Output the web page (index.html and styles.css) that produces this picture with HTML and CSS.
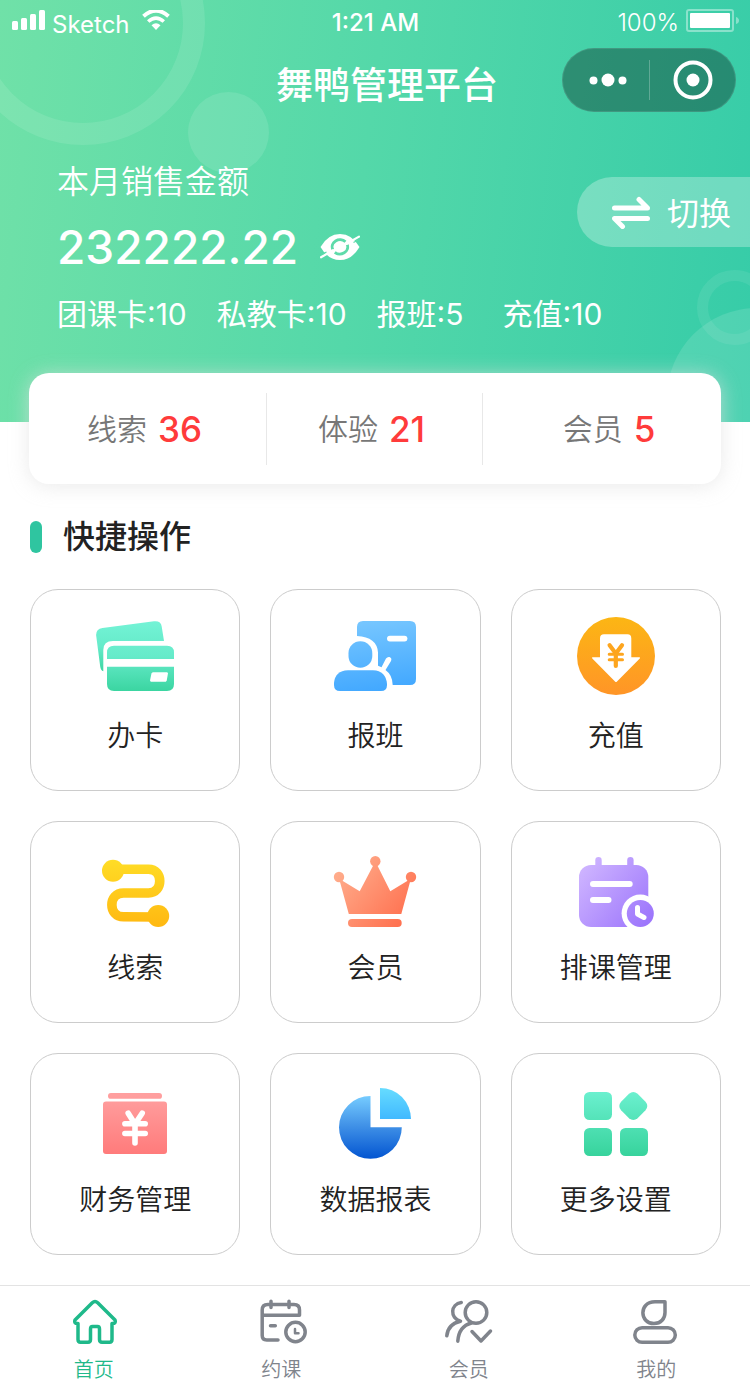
FILE: index.html
```html
<!DOCTYPE html>
<html lang="zh-CN">
<head>
<meta charset="utf-8">
<meta name="viewport" content="width=device-width, initial-scale=1">
<title>舞鸭管理平台</title>
<link rel="stylesheet" href="styles.css">
</head>
<body>
<div class="page">
  <header class="hero">
    <span class="deco deco-ring-left"></span>
    <span class="deco deco-dot-left"></span>
    <span class="deco deco-ring-right"></span>
    <span class="deco deco-dot-right"></span>

    <div class="status">
      <div class="status-left">
        <svg class="signal" width="34" height="20" viewBox="0 0 34 20" fill="#fff" aria-hidden="true">
          <rect x="0" y="11" width="6" height="9" rx="1.5"/><rect x="9" y="8" width="6" height="12" rx="1.5"/><rect x="18" y="4" width="6" height="16" rx="1.5"/><rect x="27" y="0" width="6" height="20" rx="1.5"/>
        </svg>
        <span class="carrier">Sketch</span>
        <svg class="wifi" width="28" height="20" viewBox="0 0 28 20" aria-hidden="true">
          <path d="M1.500 6.200Q14-4.800 26.500 6.200" fill="none" stroke="#fff" stroke-width="4"/>
          <path d="M6.200 11.500Q14 4.600 21.800 11.500" fill="none" stroke="#fff" stroke-width="3.600"/>
          <path d="M9.500 15.200Q14 11.500 18.500 15.200L14 20Z" fill="#fff"/>
        </svg>
      </div>
      <time class="clock">1:21 AM</time>
      <div class="status-right">
        <span class="percent">100%</span>
        <svg class="battery" width="53" height="24" viewBox="0 0 53 24" aria-hidden="true">
          <rect x="1" y="1" width="46" height="21" rx="2" fill="none" stroke="#fff" stroke-opacity=".4" stroke-width="2"/>
          <rect x="4" y="4" width="40" height="15" rx="1" fill="#fff"/>
          <path d="M50 8q3 1 3 3.500t-3 3.500z" fill="#fff" fill-opacity=".4"/>
        </svg>
      </div>
    </div>

    <div class="titlebar">
      <h1 class="title">舞鸭管理平台</h1>
      <div class="capsule">
        <button class="capsule-btn" type="button" aria-label="更多">
          <svg width="38" height="14" viewBox="0 0 38 14" fill="#fff"><circle cx="4.500" cy="7.500" r="4"/><circle cx="19" cy="7" r="6.500"/><circle cx="33.500" cy="7.500" r="4"/></svg>
        </button>
        <button class="capsule-btn" type="button" aria-label="关闭">
          <svg width="40" height="40" viewBox="0 0 40 40"><circle cx="20" cy="20" r="17.500" fill="none" stroke="#fff" stroke-width="4"/><circle cx="20" cy="20" r="6.500" fill="#fff"/></svg>
        </button>
      </div>
    </div>

    <div class="summary">
      <div class="sales">
        <div class="sales-label">本月销售金额</div>
        <div class="sales-row">
          <span class="amount">232222.22</span>
          <button class="eye" type="button" aria-label="隐藏金额">
            <svg width="40" height="28" viewBox="0 0 40 28">
              <path d="M.5 14Q8 1 20 1T39.500 14Q32 27 20 27T.5 14Z" fill="#fff"/>
              <path d="M12.800 16.500A7.800 7 0 0 1 25.500 8.800M27.300 11.800A7.800 7 0 0 1 14.800 19.300" fill="none" stroke="#5edbaa" stroke-width="2.800"/>
              <path d="M1 24.300L13 17.300M27 10.500L39 3.600" stroke="#fff" stroke-width="2.200" stroke-linecap="round"/>
              <path d="M1.500 21.500L6.500 19M33.500 9.500L38.500 6.800" stroke="#5edbaa" stroke-width="1.200"/>
            </svg>
          </button>
        </div>
      </div>
      <button class="switch" type="button">
        <svg width="40" height="34" viewBox="0 0 40 34" fill="none" stroke="#fff" stroke-width="5" stroke-linecap="round" stroke-linejoin="round"><path d="M3.500 13H36.500L28 4.500M36.500 23.500H3.500L11.500 31.500"/></svg>
        <span class="switch-label">切换</span>
      </button>
    </div>
    <ul class="counts">
      <li>团课卡:10</li>
      <li>私教卡:10</li>
      <li>报班:5</li>
      <li>充值:10</li>
    </ul>
  </header>

  <main class="main">
    <section class="stats">
      <div class="stat"><span>线索</span><strong>36</strong></div>
      <div class="stat"><span>体验</span><strong>21</strong></div>
      <div class="stat"><span>会员</span><strong>5</strong></div>
    </section>

    <section class="quick">
      <h2 class="quick-title">快捷操作</h2>
      <div class="tiles">
        <a class="tile" href="#card">
          <svg class="tile-icon" viewBox="0 0 90 84">
            <defs><linearGradient id="g-card" gradientUnits="userSpaceOnUse" x1="0" y1="6" x2="0" y2="76"><stop offset="0" stop-color="#74f3d6"/><stop offset=".5" stop-color="#66ebca"/><stop offset="1" stop-color="#3bd5a1"/></linearGradient>
            <linearGradient id="g-card-back" gradientUnits="userSpaceOnUse" x1="0" y1="6" x2="0" y2="57"><stop offset="0" stop-color="#74f3d6"/><stop offset=".5" stop-color="#66ebca"/><stop offset="1" stop-color="#3bd5a1"/></linearGradient></defs>
            <path d="M6.100 20Q6 14 12.500 13L64 6.200Q71 5.500 71.700 11.500L74 26H23Q13.300 26 13.300 35V56.300Q10.800 55.500 10.200 51.500Z" fill="url(#g-card-back)"/>
            <path d="M17 44V37.500Q17 30.700 24 30.700H77Q84 30.700 84 37.500V44ZM17 51.700H84V69Q84 76 77 76H24Q17 76 17 69ZM62.800 57.300L61.500 58.300L60 65.500L60.800 66.700H75.800L76.700 65.700L78 58.300L77.200 57.300Z" fill="url(#g-card)" fill-rule="evenodd"/>
          </svg>
          <span>办卡</span>
        </a>
        <a class="tile" href="#class">
          <svg class="tile-icon" viewBox="0 0 90 84">
            <defs><linearGradient id="g-class" gradientUnits="userSpaceOnUse" x1="40" y1="6" x2="50" y2="76"><stop offset="0" stop-color="#76c6ff"/><stop offset="1" stop-color="#42a8ff"/></linearGradient></defs>
            <g fill="url(#g-class)">
              <path d="M27 21V12Q27 6 33 6H80Q86 6 86 12V64Q86 70 80 70H62.700Q62.500 60 55.500 55L61 46Q62.200 43 59.500 42Q57.500 41.500 56 43.500L51.500 52.300L48 50.700V37.500Q47 22 27 21Z"/>
              <rect x="18.500" y="26.300" width="23.800" height="26.500" rx="11.900"/>
              <path d="M4 70V68Q5 56 18 55.300H43Q56 56 57 69V70Q57 76 51 76H10Q4 76 4 70Z"/>
            </g>
            <rect x="57" y="20.700" width="20.400" height="5.800" rx="2.900" fill="#fff"/>
          </svg>
          <span>报班</span>
        </a>
        <a class="tile" href="#recharge">
          <svg class="tile-icon" viewBox="0 0 90 84">
            <defs><linearGradient id="g-pay" x1="0" y1="0" x2="0" y2="1"><stop offset="0" stop-color="#fcb614"/><stop offset="1" stop-color="#ff9527"/></linearGradient></defs>
            <circle cx="45" cy="41" r="39" fill="url(#g-pay)"/>
            <path d="M29 42.300V23.500Q29 19.300 33 19.300H56.500Q60.300 19.300 60.300 23.500V42.300H68.500Q69.500 42.600 68.800 43.500L46 66.500Q45 67.500 44 66.500L21.300 43.500Q20.500 42.600 21.500 42.300Z" fill="#fff"/>
            <path d="M38.600 30.300L44.800 38.500L51 30.300M44.800 38.500V51" fill="none" stroke="#fda51e" stroke-width="4.200" stroke-linecap="round"/>
            <path d="M38.200 39.200H51.500M38.200 44.800H51.500" stroke="#fda51e" stroke-width="3" stroke-linecap="round"/>
          </svg>
          <span>充值</span>
        </a>
        <a class="tile" href="#leads">
          <svg class="tile-icon" viewBox="0 0 90 84">
            <defs><linearGradient id="g-lead" gradientUnits="userSpaceOnUse" x1="0" y1="12" x2="0" y2="80"><stop offset="0" stop-color="#ffdd26"/><stop offset="1" stop-color="#ffb811"/></linearGradient></defs>
            <circle cx="23" cy="23.700" r="11" fill="url(#g-lead)"/><circle cx="68.200" cy="69" r="11" fill="url(#g-lead)"/>
            <path d="M26 22.200H58.500C73.500 22.200 73.500 46 58.500 46H33.500C18 46 18 69.800 33.500 69.800L66 70" fill="none" stroke="url(#g-lead)" stroke-width="9.600"/>
          </svg>
          <span>线索</span>
        </a>
        <a class="tile" href="#members">
          <svg class="tile-icon" viewBox="0 0 90 84">
            <defs><linearGradient id="g-crown" gradientUnits="userSpaceOnUse" x1="10" y1="25" x2="72" y2="76"><stop offset="0" stop-color="#ffab8a"/><stop offset="1" stop-color="#ff7150"/></linearGradient></defs>
            <g fill="url(#g-crown)"><circle cx="45.300" cy="14.200" r="5.200"/><circle cx="9" cy="30" r="5.200"/><circle cx="81" cy="30" r="5.200"/>
            <path d="M43.200 18.500H47.400L60.300 44.200L78 33.500L80 35L71.300 67H18.800L10 35L12 33.500L29.700 44.200Z"/>
            <rect x="18" y="72" width="53.700" height="8" rx="4"/></g>
          </svg>
          <span>会员</span>
        </a>
        <a class="tile" href="#schedule">
          <svg class="tile-icon" viewBox="0 0 90 84">
            <defs><linearGradient id="g-sched" gradientUnits="userSpaceOnUse" x1="10" y1="22" x2="76" y2="76"><stop offset="0" stop-color="#ceb4ff"/><stop offset="1" stop-color="#9d76fc"/></linearGradient></defs>
            <g fill="url(#g-sched)"><rect x="24.300" y="10" width="6.400" height="14" rx="3.200"/><rect x="56.200" y="10" width="6.400" height="14" rx="3.200"/><rect x="8" y="18" width="69.300" height="62" rx="12"/></g>
            <path d="M22 37H58.700M22 53H37.500" stroke="#fff" stroke-width="6" stroke-linecap="round"/>
            <circle cx="69.300" cy="66.300" r="18.700" fill="#fff"/><circle cx="69.300" cy="66.500" r="13.500" fill="url(#g-sched)"/>
            <path d="M66.500 60.500V67L73 70.500" fill="none" stroke="#fff" stroke-width="5" stroke-linecap="round" stroke-linejoin="round"/>
          </svg>
          <span>排课管理</span>
        </a>
        <a class="tile" href="#finance">
          <svg class="tile-icon" viewBox="0 0 90 84">
            <defs><linearGradient id="g-fin" gradientUnits="userSpaceOnUse" x1="0" y1="16" x2="0" y2="75"><stop offset="0" stop-color="#ff9f9f"/><stop offset="1" stop-color="#ff7b7b"/></linearGradient></defs>
            <g fill="url(#g-fin)"><rect x="18" y="14" width="54" height="5.800" rx="2.900"/><rect x="13" y="22.600" width="64" height="52.400" rx="3"/></g>
            <path d="M38.200 34.200L45 45L52.200 34.200M45 45V64M34.900 44.800H55.200M34.900 54.500H55.200" fill="none" stroke="#fff" stroke-width="5.600" stroke-linecap="round"/>
          </svg>
          <span>财务管理</span>
        </a>
        <a class="tile" href="#report">
          <svg class="tile-icon" viewBox="0 0 90 84">
            <defs><linearGradient id="g-pie" x1="0" y1="0" x2="0" y2="1"><stop offset="0" stop-color="#76ccff"/><stop offset=".45" stop-color="#4394e8"/><stop offset="1" stop-color="#0355d1"/></linearGradient><linearGradient id="g-slice" x1="0" y1="0" x2="0" y2="1"><stop offset="0" stop-color="#66dcff"/><stop offset="1" stop-color="#41b9ff"/></linearGradient></defs>
            <path d="M40.500 17A31.400 31.400 0 1 0 71.800 48.300H40.500Z" fill="url(#g-pie)"/><path d="M50 9A31 31 0 0 1 81 40H50Z" fill="url(#g-slice)"/>
          </svg>
          <span>数据报表</span>
        </a>
        <a class="tile" href="#settings">
          <svg class="tile-icon" viewBox="0 0 90 84">
            <defs><linearGradient id="g-more" gradientUnits="userSpaceOnUse" x1="0" y1="13" x2="0" y2="77"><stop offset="0" stop-color="#6bf0cf"/><stop offset="1" stop-color="#37d39c"/></linearGradient></defs>
            <g fill="url(#g-more)"><rect x="13" y="13" width="28" height="28" rx="5.500"/><rect x="13" y="49" width="28" height="28" rx="5.500"/><rect x="49" y="49" width="28" height="28" rx="5.500"/>
            <path d="M58 14.800Q62.300 11.200 66.600 14.800L74.500 22.700Q78.100 27 74.500 31.300L66.600 39.200Q62.300 42.800 58 39.200L50.100 31.300Q46.500 27 50.100 22.700Z"/></g>
          </svg>
          <span>更多设置</span>
        </a>
      </div>
    </section>
  </main>

  <nav class="tabs">
    <a class="tab tab-active" href="#home" aria-current="page">
      <svg class="tab-icon" viewBox="0 0 56 48"><path d="M26.300 4.800Q29 2.200 31.700 4.800L49 22Q50.200 25.800 46 25.500V41.500Q46 44.200 43.500 44.200H36Q33.500 44.200 33.500 41.500V31Q33.500 28.500 31.500 28.500H26.500Q24.500 28.500 24.500 31V41.500Q24.500 44.200 22 44.200H14.500Q12 44.200 12 41.500V25.500Q7.800 25.800 9 22Z"/></svg>
      <span>首页</span>
    </a>
    <a class="tab" href="#booking">
      <svg class="tab-icon" viewBox="0 0 56 48"><path d="M9.200 17.200H46.500V12Q46.500 6.500 41 6.500H14.700Q9.200 6.500 9.200 12V37.500Q9.200 42 13.700 42H25M18 3.200V9.500M36 3.200V9.500M17.500 27.800H22.300"/><circle cx="42.500" cy="34" r="9.700"/><path d="M42 31V35.200H45.500" stroke-width="2.500"/></svg>
      <span>约课</span>
    </a>
    <a class="tab" href="#member">
      <svg class="tab-icon" viewBox="0 0 56 48"><circle cx="35" cy="14.500" r="10.800"/><path d="M20.300 4.500C9.500 6 8.500 20 19.500 23.200C11 25 6.500 30.500 5.800 37.800M30.500 25C22.500 27 17.500 33.500 16.800 43.200M31 33.500L40 43L49.500 33"/></svg>
      <span>会员</span>
    </a>
    <a class="tab" href="#mine">
      <svg class="tab-icon" viewBox="0 0 56 48"><path d="M37 3.800H27C10.500 3.800 11.500 25.600 26 25.600C33 25.600 37 20.500 37 14.500Z"/><rect x="6.800" y="29.700" width="40.500" height="14.600" rx="7.300"/></svg>
      <span>我的</span>
    </a>
  </nav>
</div>
</body>
</html>
```
FILE: styles.css
```css
* {
  box-sizing: border-box;
}

body {
  margin: 0;
  background: #fff;
  color: #222;
  font-family: Inter, "Noto Sans CJK SC", sans-serif;
}

h1, h2, ul {
  margin: 0;
  padding: 0;
}

button {
  padding: 0;
  border: 0;
  background: none;
  color: inherit;
  font: inherit;
}

a {
  color: inherit;
  text-decoration: none;
}

svg {
  display: block;
  flex: none;
}

.page {
  display: flex;
  flex-direction: column;
  min-height: 100vh;
}

/* Header */
.hero {
  position: relative;
  overflow: hidden;
  padding-bottom: 88px;
  background: linear-gradient(97deg, #70e1a8 0%, #54d8a9 48%, #36cca8 100%);
  color: #fff;
}

.deco {
  position: absolute;
  border-radius: 50%;
}

.deco-ring-left {
  top: -99px;
  left: -39px;
  width: 244px;
  height: 244px;
  border: 22px solid rgba(255, 255, 255, .1);
}

.deco-dot-left {
  top: 92px;
  left: 188px;
  width: 81px;
  height: 81px;
  background: rgba(255, 255, 255, .11);
}

.deco-ring-right {
  top: 270px;
  right: -22px;
  width: 75px;
  height: 75px;
  border: 11px solid rgba(255, 255, 255, .08);
}

.deco-dot-right {
  top: 308px;
  right: -97px;
  width: 180px;
  height: 180px;
  background: rgba(255, 255, 255, .12);
}

.status,
.titlebar,
.summary,
.counts {
  position: relative;
}

.status {
  display: grid;
  grid-template-columns: 1fr auto 1fr;
  align-items: center;
  height: 48px;
  padding: 0 11px 2px 12px;
  font-size: 24px;
  line-height: 30px;
}

.status-left,
.status-right {
  display: flex;
  align-items: center;
}

.status-left {
  gap: 6px;
}

.signal,
.wifi {
  margin-bottom: 6px;
}

.battery {
  margin-bottom: 4px;
}

.carrier {
  padding-top: 3px;
  margin-right: 6px;
}

.clock {
  font-weight: 500;
}

.status-right {
  justify-content: flex-end;
  gap: 7px;
}

.percent {
  font-weight: 300;
}

.titlebar {
  display: grid;
  grid-template-columns: 1fr auto 1fr;
  align-items: center;
  padding: 0 14px 0 38px;
}

.title {
  grid-column: 2;
  padding-top: 12px;
  font-size: 37px;
  font-weight: 500;
  line-height: 52px;
}

.capsule {
  display: grid;
  grid-template-columns: 1fr 1fr;
  align-items: center;
  justify-self: end;
  width: 174px;
  height: 64px;
  border: 1px solid rgba(255, 255, 255, .1);
  border-radius: 32px;
  background: rgba(12, 48, 40, .42);
}

.capsule-btn {
  display: grid;
  place-items: center;
  height: 40px;
  padding-left: 4px;
}

.capsule-btn + .capsule-btn {
  padding: 0;
  border-left: 1px solid rgba(255, 255, 255, .25);
}

.summary {
  display: flex;
  justify-content: space-between;
  align-items: flex-start;
  margin-top: 48px;
  padding-left: 57px;
}

.sales-label {
  font-size: 32px;
  font-weight: 350;
  line-height: 44px;
}

.sales-row {
  display: flex;
  align-items: center;
  gap: 22px;
  margin-top: 13px;
}

.amount {
  font-size: 46px;
  font-weight: 500;
  line-height: 60px;
}

.switch {
  display: flex;
  align-items: center;
  gap: 16px;
  height: 70px;
  margin-top: 17px;
  padding: 0 19px 0 34px;
  border-radius: 35px 0 0 35px;
  background: rgba(255, 255, 255, .28);
  font-size: 32px;
}

.switch-label {
  padding-bottom: 3px;
}

.counts {
  display: flex;
  gap: 30px;
  margin-top: 17px;
  padding-left: 57px;
  list-style: none;
  font-size: 30px;
  line-height: 40px;
}

.counts li {
  min-width: 96px;
}

/* Figures card */
.stats {
  position: relative;
  display: grid;
  grid-template-columns: 11fr 10fr 11fr;
  align-items: center;
  height: 111px;
  margin: -49px 29px 0;
  border-radius: 20px;
  background: #fff;
  box-shadow: 0 2px 20px rgba(225, 225, 225, .7);
}

.stat {
  display: flex;
  align-items: center;
  justify-content: center;
  gap: 11px;
  height: 72px;
  padding-right: 6px;
  border-right: 1px solid #e8e8e8;
  color: #777;
  font-size: 30px;
  font-weight: 350;
}

.stat span {
  padding-bottom: 3px;
}

.stat:last-child {
  padding: 0 0 0 14px;
  border: 0;
}

.stat strong {
  color: #ff3b3b;
  font-size: 35px;
  font-weight: 500;
}

/* Shortcuts */
.quick {
  padding: 30px 29px 30px 30px;
}

.quick-title {
  display: flex;
  align-items: center;
  gap: 21px;
  font-size: 32px;
  font-weight: 500;
  line-height: 45px;
}

.quick-title::before {
  width: 12px;
  height: 32px;
  border-radius: 6px;
  background: #2fc5a0;
  content: "";
}

.tiles {
  display: grid;
  grid-template-columns: repeat(3, 1fr);
  gap: 30px;
  margin-top: 30px;
}

.tile {
  display: flex;
  flex-direction: column;
  align-items: center;
  gap: 17px;
  height: 202px;
  padding-top: 25px;
  border: 1px solid #ccc;
  border-radius: 28px;
  font-size: 28px;
  font-weight: 350;
  line-height: 40px;
}

.tile-icon {
  width: 90px;
  height: 84px;
}

/* Bottom navigation */
.tabs {
  display: grid;
  grid-template-columns: repeat(4, 1fr);
  margin-top: auto;
  border-top: 1px solid #e3e3e3;
  background: #fff;
}

.tab {
  display: flex;
  flex-direction: column;
  align-items: center;
  gap: 12px;
  padding-top: 12px;
  color: #80848c;
  font-size: 20px;
  font-weight: 350;
  line-height: 25px;
}

.tab-active {
  color: #1fb98a;
}

.tab-icon {
  width: 56px;
  height: 48px;
  fill: none;
  stroke: currentColor;
  stroke-width: 3.5;
  stroke-linecap: round;
  stroke-linejoin: round;
}
```
